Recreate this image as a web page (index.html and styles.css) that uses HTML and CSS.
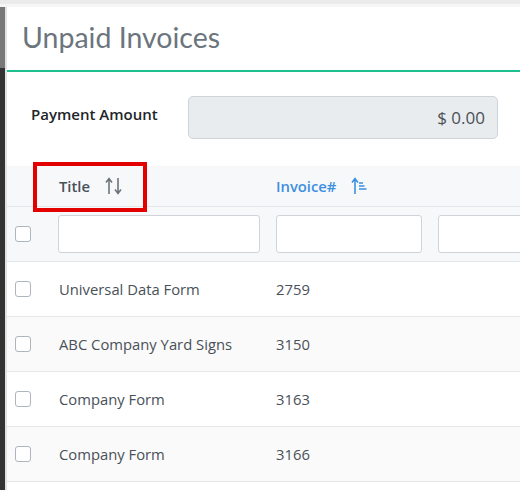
FILE: index.html
```html
<!DOCTYPE html>
<html>
<head>
<meta charset="utf-8">
<link rel="stylesheet" href="styles.css">
</head>
<body>
<div class="topbar"></div>
<div class="frame">
  <div class="sidebar"><div class="side-top"></div><div class="side-bottom"></div></div>
  <div class="edge"></div>
  <main class="panel">
    <h1 class="title">Unpaid Invoices</h1>
    <div class="content">
      <div class="pay-row">
        <label class="pay-label">Payment Amount</label>
        <div class="pay-input">$ 0.00</div>
      </div>
      <table class="grid">
        <colgroup>
          <col class="c-check"><col class="c-title"><col class="c-inv"><col class="c-rest">
        </colgroup>
        <thead>
          <tr class="head">
            <th></th>
            <th><span class="hl">Title <svg class="sort" width="18" height="20" viewBox="0 0 18 20"><path d="M4 18V3M1 6.5L4 2.5 7 6.5" fill="none" stroke="#6c757d" stroke-width="1.6"/><path d="M13 2v15M10 13.5L13 17.5 16 13.5" fill="none" stroke="#6c757d" stroke-width="1.6"/></svg></span></th>
            <th><span class="hl blue">Invoice# <svg class="sort" width="18" height="20" viewBox="0 0 18 20"><path d="M4 18V3M1 6.5L4 2.5 7 6.5" fill="none" stroke="#3d8fe0" stroke-width="1.6"/><path d="M8 7h4M8 10h5.5M8 13h7.5" fill="none" stroke="#3d8fe0" stroke-width="1.3"/></svg></span></th>
            <th></th>
          </tr>
          <tr class="filter">
            <td><span class="cb"></span></td>
            <td><div class="fi"></div></td>
            <td><div class="fi"></div></td>
            <td><div class="fi"></div></td>
          </tr>
        </thead>
        <tbody>
          <tr><td><span class="cb"></span></td><td>Universal Data Form</td><td>2759</td><td></td></tr>
          <tr class="alt"><td><span class="cb"></span></td><td>ABC Company Yard Signs</td><td>3150</td><td></td></tr>
          <tr><td><span class="cb"></span></td><td>Company Form</td><td>3163</td><td></td></tr>
          <tr class="alt"><td><span class="cb"></span></td><td>Company Form</td><td>3166</td><td></td></tr>
        </tbody>
      </table>
    </div>
  </main>
</div>
<div class="highlight"></div>
</body>
</html>
```

FILE: styles.css
```css
* { box-sizing: border-box; }
html, body { margin: 0; padding: 0; }
body {
  width: 520px;
  height: 490px;
  overflow: hidden;
  background: #fff;
  font-family: "Open Sans", "Noto Sans", sans-serif;
  color: #495057;
  position: relative;
}
.topbar {
  height: 7px;
  background: linear-gradient(#ebebeb 0 4px, #f6f6f6 4px 7px);
}
.frame {
  display: flex;
  height: 483px;
}
.sidebar {
  width: 5px;
  display: flex;
  flex-direction: column;
}
.side-top { height: 61px; background: #787878; }
.side-bottom { flex: 1; background: #333333; }
.edge { width: 2px; background: #e2e2e2; }
.panel {
  flex: 1;
  min-width: 0;
  overflow: hidden;
}
.title {
  margin: 0;
  height: 65px;
  padding: 15px 0 0 15px;
  font-family: "Lato", "Open Sans", sans-serif;
  font-weight: 400;
  font-size: 28.5px;
  line-height: 30px;
  color: #6c757d;
  border-bottom: 2px solid #1fc08f;
}
.content { width: 620px; }
.pay-row {
  display: flex;
  padding: 24px 0 0 24px;
  height: 94px;
  align-items: flex-start;
}
.pay-label {
  width: 157px;
  padding-top: 8px;
  font-size: 15px;
  font-weight: 600;
  color: #212529;
}
.pay-input {
  width: 310px;
  height: 43px;
  background: #e9ecef;
  border: 1px solid #ced4da;
  border-radius: 5px;
  text-align: right;
  padding: 0 12px;
  line-height: 41px;
  font-size: 17px;
  color: #495057;
}
.grid {
  border-collapse: collapse;
  table-layout: fixed;
  width: 620px;
  font-size: 14.8px;
}
.c-check { width: 43px; }
.c-title { width: 218px; }
.c-inv { width: 162px; }
.c-rest { width: 197px; }
.grid th, .grid td {
  padding: 0 8px;
  text-align: left;
  vertical-align: middle;
}
.head { background: #f7f8fa; height: 40px; }
.head th { border-bottom: 1px solid #e3e6ea; }
.hl {
  font-weight: 600;
  color: #495057;
  display: inline-flex;
  align-items: center;
  gap: 15px;
  padding-left: 1px;
}
.hl.blue { color: #3d8fe0; gap: 15px; padding-left: 0; }
.sort { display: block; margin-top: 1px; }
.filter { background: #f7f8fa; height: 55px; }
.filter td { border-bottom: 1px solid #e3e6ea; }
.fi {
  height: 38px;
  background: #fff;
  border: 1px solid #ced4da;
  border-radius: 3px;
}
.cb {
  display: block;
  width: 16px;
  height: 16px;
  border: 1px solid #adb5bd;
  border-radius: 3px;
  background: #fff;
}
tbody tr { height: 55px; }
tbody td { border-bottom: 1px solid #e6e6e6; }
tbody td:nth-child(2) { padding-left: 9px; }
tbody tr.alt { background: #fafafa; }
.highlight {
  position: absolute;
  left: 33px;
  top: 162px;
  width: 114px;
  height: 50px;
  border: 4px solid #e20000;
}
```
